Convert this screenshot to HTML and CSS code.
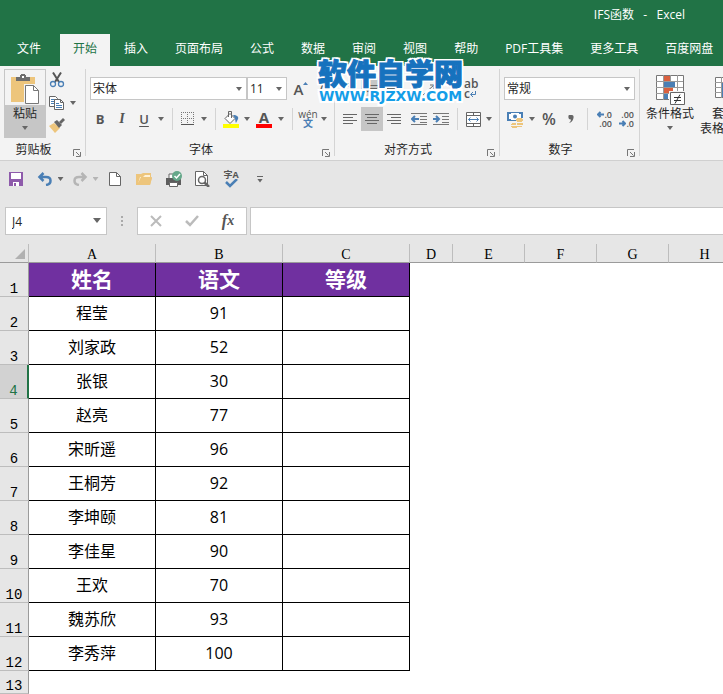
FILE: index.html
```
<!DOCTYPE html>
<html lang="zh-CN">
<head>
    <meta charset="UTF-8">
    <meta name="viewport" content="width=device-width, initial-scale=1.0">
    <title>IFS函数 - Excel</title>
    <link rel="stylesheet" href="styles.css">
</head>
<body>
    <header class="titlebar">IFS函数 &nbsp;&nbsp;-&nbsp;&nbsp; Excel</header>

    <nav class="tabs">
        <button class="tab tab-file">文件</button>
        <button class="tab active">开始</button>
        <button class="tab">插入</button>
        <button class="tab">页面布局</button>
        <button class="tab">公式</button>
        <button class="tab">数据</button>
        <button class="tab">审阅</button>
        <button class="tab">视图</button>
        <button class="tab">帮助</button>
        <button class="tab">PDF工具集</button>
        <button class="tab">更多工具</button>
        <button class="tab">百度网盘</button>
    </nav>

    <section class="ribbon">
        <!-- 剪贴板 -->
        <div class="group">
            <div class="group-body clipboard">
                <button class="paste">
                    <span class="paste-icon">
                        <svg width="30" height="32" viewBox="0 0 30 32">
                            <path d="M1 3h24v25H1z" fill="#edc57c"/>
                            <path d="M6 3h4V1h1V0h4v1h1v2h4v4H6z" fill="#6d6d6d"/>
                            <path d="M12 2h2v2h-2z" fill="#fff"/>
                            <path d="M14 10h16v20H14z" fill="#f3f3f3"/>
                            <path d="M15.500 11.500h8l5 5v13h-13z" fill="#fff" stroke="#777"/>
                            <path d="M23.500 11.500v5h5" fill="none" stroke="#777"/>
                        </svg>
                    </span>
                    <span class="paste-label">粘贴<i class="caret"></i></span>
                </button>
                <div class="clip-tools">
                    <button class="mini" aria-label="剪切">
                        <svg width="16" height="16" viewBox="0 0 16 16" fill="none">
                            <path d="M4 0.500L10 10M12 0.500L6 10" stroke="#555" stroke-width="2"/>
                            <circle cx="4" cy="12" r="2.500" stroke="#4a7fb5" stroke-width="1.300"/>
                            <circle cx="12" cy="12" r="2.500" stroke="#4a7fb5" stroke-width="1.300"/>
                        </svg>
                    </button>
                    <div class="mini-row">
                        <button class="mini" aria-label="复制">
                            <svg width="16" height="16" viewBox="0 0 16 16">
                                <path d="M0.500 1.500h6l2 2v8h-8z" fill="#fff" stroke="#666"/>
                                <path d="M2 4.500h4M2 6.500h3M2 8.500h3" stroke="#4a7fb5"/>
                                <path d="M5.500 4.500h6l3 3v7h-9z" fill="#fff" stroke="#666"/>
                                <path d="M11.500 4.500v3h3" fill="none" stroke="#666"/>
                                <path d="M7 8.500h3M7 10.500h6M7 12.500h6" stroke="#4a7fb5"/>
                            </svg>
                        </button>
                        <button class="drop" aria-label="复制选项"><i class="caret"></i></button>
                    </div>
                    <button class="mini" aria-label="格式刷">
                        <svg width="18" height="16" viewBox="0 0 18 16">
                            <path d="M0 8l5-3 6 5-5 5z" fill="#edc57c"/>
                            <path d="M5 4l3-2 5 5-3 3z" fill="#666"/>
                            <path d="M10 4l4-4 2 2-4 4z" fill="#666"/>
                        </svg>
                    </button>
                </div>
            </div>
            <div class="group-label">剪贴板<svg class="launcher" width="8" height="8" viewBox="0 0 8 8"><path d="M0.500 7V0.500H7M3 3l3.500 3.500M7.500 3v4.500H3" fill="none" stroke="#777"/></svg></div>
        </div>

        <!-- 字体 -->
        <div class="group">
            <div class="group-body font">
                <div class="row">
                    <span class="combo combo-font"><select aria-label="字体"><option>宋体</option></select></span>
                    <span class="combo combo-size"><select aria-label="字号"><option>11</option></select></span>
                    <button class="tool grow" aria-label="增大字号">A<svg width="5" height="3" viewBox="0 0 5 3"><path d="M0 3h5L2.500 0z" fill="#4a7fb5"/></svg></button>
                    <button class="tool shrink" aria-label="减小字号">A</button>
                </div>
                <div class="row">
                    <button class="tool bold">B</button>
                    <button class="tool italic">I</button>
                    <button class="tool underline">U</button>
                    <button class="drop" aria-label="下划线选项"><i class="caret"></i></button>
                    <span class="sep"></span>
                    <button class="tool narrow" aria-label="边框">
                        <svg width="14" height="14" viewBox="0 0 14 14"><path d="M0.500 0v13M6.500 0v13M12.500 0v13M0 0.500h13M0 6.500h13" stroke="#777" stroke-dasharray="1 1"/><path d="M0 12.500h13" stroke="#555"/></svg>
                    </button>
                    <button class="drop" aria-label="边框选项"><i class="caret"></i></button>
                    <span class="sep"></span>
                    <button class="tool narrow" aria-label="填充颜色">
                        <svg width="16" height="17" viewBox="0 0 16 17">
                            <path d="M2 7.500l5-5 5 5-5 5z" fill="#fff" stroke="#666"/>
                            <path d="M5.500 6V0.500h3V7" fill="none" stroke="#666"/>
                            <path d="M10 4c4 0 6 2 5 4l-2 4c-1-2 0-4-3-8z" fill="#4a7fb5"/>
                            <path d="M0 13h16v4H0z" fill="#ff0"/>
                        </svg>
                    </button>
                    <button class="drop" aria-label="填充选项"><i class="caret"></i></button>
                    <button class="tool font-color" aria-label="字体颜色"><span>A</span></button>
                    <button class="drop" aria-label="字体颜色选项"><i class="caret"></i></button>
                    <span class="sep"></span>
                    <button class="tool narrow pinyin"><span>wén</span><b>文</b></button>
                    <button class="drop" aria-label="拼音选项"><i class="caret"></i></button>
                </div>
            </div>
            <div class="group-label">字体<svg class="launcher" width="8" height="8" viewBox="0 0 8 8"><path d="M0.500 7V0.500H7M3 3l3.500 3.500M7.500 3v4.500H3" fill="none" stroke="#777"/></svg></div>
        </div>

        <!-- 对齐方式 -->
        <div class="group">
            <div class="group-body align">
                <div class="row">
                    <button class="tool" aria-label="顶端对齐"><svg width="14" height="14" viewBox="0 0 14 14"><path d="M0 1.500h14M2 4.500h10M0 7.500h14" stroke="#666"/></svg></button>
                    <button class="tool pressed" aria-label="垂直居中"><svg width="14" height="14" viewBox="0 0 14 14"><path d="M0 3.500h14M2 6.500h10M0 9.500h14" stroke="#666"/></svg></button>
                    <button class="tool" aria-label="底端对齐"><svg width="14" height="14" viewBox="0 0 14 14"><path d="M0 6.500h14M2 9.500h10M0 12.500h14" stroke="#666"/></svg></button>
                    <button class="tool orient" aria-label="方向"><svg width="16" height="14" viewBox="0 0 16 14"><path d="M3 13L14 3M10 3h4v4" fill="none" stroke="#666"/></svg></button>
                    <button class="tool wrap-text" aria-label="自动换行"><span>ab</span><span>c<svg width="6" height="6" viewBox="0 0 6 6"><path d="M5.500 0v3.500H1M3 1L0.500 3.500 3 6" fill="none" stroke="#4a7fb5"/></svg></span></button>
                </div>
                <div class="row">
                    <button class="tool" aria-label="左对齐"><svg width="14" height="12" viewBox="0 0 14 12"><path d="M0 1.500h14M0 4.500h10M0 7.500h14M0 10.500h10" stroke="#666"/></svg></button>
                    <button class="tool pressed" aria-label="居中"><svg width="14" height="12" viewBox="0 0 14 12"><path d="M0 1.500h14M2 4.500h10M0 7.500h14M2 10.500h10" stroke="#666"/></svg></button>
                    <button class="tool" aria-label="右对齐"><svg width="14" height="12" viewBox="0 0 14 12"><path d="M0 1.500h14M4 4.500h10M0 7.500h14M4 10.500h10" stroke="#666"/></svg></button>
                    <button class="tool indent" aria-label="减少缩进"><svg width="16" height="14" viewBox="0 0 16 14"><path d="M0 1.500h16M9 4.500h7M9 7.500h7M9 10.500h7M0 12.500h16" stroke="#777"/><path d="M8 7H1M4 4L1 7l3 3" fill="none" stroke="#4a7fb5" stroke-width="2"/></svg></button>
                    <button class="tool" aria-label="增加缩进"><svg width="16" height="14" viewBox="0 0 16 14"><path d="M0 1.500h16M9 4.500h7M9 7.500h7M9 10.500h7M0 12.500h16" stroke="#777"/><path d="M0 7h6M3 4l3 3-3 3" fill="none" stroke="#4a7fb5" stroke-width="2"/></svg></button>
                    <span class="sep"></span>
                    <button class="tool narrow" aria-label="合并后居中"><svg width="15" height="15" viewBox="0 0 15 15"><path d="M0.500 0.500h14v14H0.500zM0.500 3.500h14M0.500 11.500h14M7.500 0.500v3M7.500 11.500v3" fill="#fff" stroke="#666"/><path d="M2.500 7.500h10M4.500 5.500l-2 2 2 2M10.500 5.500l2 2-2 2" fill="none" stroke="#4a7fb5"/></svg></button>
                    <button class="drop" aria-label="合并选项"><i class="caret"></i></button>
                </div>
            </div>
            <div class="group-label">对齐方式<svg class="launcher" width="8" height="8" viewBox="0 0 8 8"><path d="M0.500 7V0.500H7M3 3l3.500 3.500M7.500 3v4.500H3" fill="none" stroke="#777"/></svg></div>
        </div>

        <!-- 数字 -->
        <div class="group">
            <div class="group-body number">
                <div class="row">
                    <span class="combo combo-number"><select aria-label="数字格式"><option>常规</option></select></span>
                </div>
                <div class="row">
                    <button class="tool" aria-label="会计数字格式">
                        <svg width="17" height="17" viewBox="0 0 17 17">
                            <path d="M0 1h16v9H0z" fill="#4a7fb5"/><path d="M2 3h2V2h8v1h2v5h-2v1H4V8H2z" fill="#fff"/><circle cx="8" cy="5.500" r="2" fill="#4a7fb5"/>
                            <path d="M9 7h7v10H9zM4 12h6v5H4z" fill="#f3f3f3"/>
                            <path d="M10 7h5v1h1v2h-1v1H10v-1H9V8h1zM10 12h6v2h-6zM10 15h5v1h-5zM5 12h4v2H4v-1h1zM4 15h6v2H5v-1H4z" fill="#edc57c"/>
                        </svg>
                    </button>
                    <button class="drop" aria-label="会计格式选项"><i class="caret"></i></button>
                    <button class="tool percent">%</button>
                    <button class="tool" aria-label="千位分隔样式"><svg width="6" height="8" viewBox="0 0 6 8"><path d="M1 0h3c1 0 2 1 1.500 3C5 6 3 7.500 1 8c1-1 2-2 2-3.500C0 5 0 0.500 1 0z" fill="#666"/></svg></button>
                    <span class="sep"></span>
                    <button class="tool narrow decimal"><span><svg width="7" height="7" viewBox="0 0 7 7"><path d="M7 3.500H1M3.500 1L1 3.500 3.500 6" fill="none" stroke="#4a7fb5" stroke-width="2"/></svg>.0</span><span>.00</span></button>
                    <button class="tool decimal"><span>.00</span><span><svg width="7" height="7" viewBox="0 0 7 7"><path d="M0 3.500h6M3.500 1L6 3.500 3.500 6" fill="none" stroke="#4a7fb5" stroke-width="2"/></svg>.0</span></button>
                </div>
            </div>
            <div class="group-label">数字<svg class="launcher" width="8" height="8" viewBox="0 0 8 8"><path d="M0.500 7V0.500H7M3 3l3.500 3.500M7.500 3v4.500H3" fill="none" stroke="#777"/></svg></div>
        </div>

        <!-- 样式 -->
        <div class="group styles">
            <button class="big">
                <svg width="32" height="32" viewBox="0 0 32 32">
                    <path d="M2.500 1.500h27v24h-27z" fill="#fff" stroke="#777"/>
                    <path d="M9.500 1v25M16.500 1v25M23.500 1v25M2 7.500h27M2 13.500h27M2 19.500h27" stroke="#999"/>
                    <path d="M10 2h6v5h-6zM10 14h9v5h-9z" fill="#d9603f"/>
                    <path d="M10 8h11v5H10zM10 20h4v5h-4z" fill="#4a7fb5"/>
                    <path d="M15 17h17v15H15z" fill="#f3f3f3"/>
                    <path d="M16.500 18.500h14v12h-14z" fill="#fff" stroke="#666"/>
                    <path d="M20 23.500h7M20 26.500h7M26 20.500l-5 9" stroke="#333"/>
                </svg>
                <span>条件格式</span>
                <i class="caret"></i>
            </button>
            <button class="big big-table">
                <svg width="32" height="32" viewBox="0 0 32 32">
                    <path d="M7.500 3.500h24v20h-24z" fill="#fff" stroke="#777"/>
                    <path d="M13.500 3v21M19.500 3v21M25.500 3v21M7 8.500h24M7 13.500h24M7 18.500h24" stroke="#999"/>
                    <path d="M14 9h17v14H14z" fill="#4a7fb5"/>
                </svg>
                <span>套用</span>
                <span>表格格式</span>
            </button>
        </div>
    </section>

    <!-- 快速访问工具栏 -->
    <div class="quickbar">
        <button class="quick" aria-label="保存"><svg width="14" height="14" viewBox="0 0 14 14"><path d="M0 0h14v14H0z" fill="#8e5bab"/><path d="M2 1h10v6H2zM4 10h6v4H4z" fill="#fff"/><path d="M5 11h2v3H5z" fill="#8e5bab"/></svg></button>
        <button class="quick quick-split" aria-label="撤消"><svg width="16" height="14" viewBox="0 0 16 14"><path d="M2 5h7c6 0 6 7 0 8M6.500 1l-4 4 4 4" fill="none" stroke="#4a7fb5" stroke-width="2.500"/></svg><i class="caret"></i></button>
        <button class="quick quick-split disabled" aria-label="恢复"><svg width="16" height="14" viewBox="0 0 16 14"><path d="M14 5H7c-6 0-6 7 0 8M9.500 1l4 4-4 4" fill="none" stroke="#b5b5b5" stroke-width="2.500"/></svg><i class="caret"></i></button>
        <button class="quick" aria-label="新建"><svg width="12" height="14" viewBox="0 0 12 14"><path d="M0.500 0.500h7l4 4v9h-11z" fill="#fff" stroke="#666"/><path d="M7.500 0.500v4h4" fill="none" stroke="#666"/></svg></button>
        <button class="quick" aria-label="打开"><svg width="17" height="14" viewBox="0 0 17 14"><path d="M0 12V2h5l2-1h8v4h1l-2 8H0z" fill="#edc57c"/><path d="M2 12L5 5h9V3H9L7 5H4z" fill="#fff1d6"/><path d="M1 13l4-7h11l-2 7z" fill="#edc57c"/></svg></button>
        <button class="quick" aria-label="快速打印"><svg width="17" height="17" viewBox="0 0 17 17"><path d="M4 3h8v5H4z" fill="#fff" stroke="#666"/><path d="M1 7h15v7H1z" fill="#5d5d5d"/><path d="M4.500 11.500h8v4h-8z" fill="#fff" stroke="#666"/><circle cx="12" cy="5" r="5" fill="#65a88a"/><path d="M9.500 5l2 2 3.500-4" fill="none" stroke="#fff" stroke-width="1.500"/></svg></button>
        <button class="quick" aria-label="打印预览"><svg width="15" height="16" viewBox="0 0 15 16"><path d="M0.500 0.500h8l4 4v10h-12z" fill="#fff" stroke="#666"/><path d="M8.500 0.500v4h4" fill="none" stroke="#666"/><circle cx="7" cy="9" r="3.500" fill="#fff" stroke="#666" stroke-width="1.500"/><path d="M9.500 11.500L14 16" stroke="#666" stroke-width="2.500"/></svg></button>
        <button class="quick spell" aria-label="拼写检查"><span>字A</span><svg width="14" height="9" viewBox="0 0 14 9"><path d="M2 3l4 4 7-7" fill="none" stroke="#4a7fb5" stroke-width="2.500"/></svg></button>
        <button class="quick customize" aria-label="自定义"><i class="caret"></i></button>
    </div>

    <!-- 编辑栏 -->
    <div class="formula-bar">
        <span class="name-box"><input type="text" value="J4" aria-label="名称框"></span>
        <span class="grip"><i></i><i></i><i></i></span>
        <div class="fx-tools">
            <button aria-label="取消"><svg width="12" height="12" viewBox="0 0 12 12"><path d="M1 1l10 10M11 1L1 11" stroke="#bbb" stroke-width="2"/></svg></button>
            <button aria-label="输入"><svg width="14" height="12" viewBox="0 0 14 12"><path d="M1 6l4 4 8-9" fill="none" stroke="#bbb" stroke-width="2.500"/></svg></button>
            <button class="fx">f<small>x</small></button>
        </div>
        <input class="formula" type="text" aria-label="编辑栏">
    </div>

    <main class="sheet">
        <table>
            <colgroup>
                <col class="col-head"><col class="col-data"><col class="col-data"><col class="col-data">
                <col class="col-d"><col class="col-rest"><col class="col-rest"><col class="col-rest"><col class="col-rest">
            </colgroup>
            <thead>
                <tr>
                    <th class="corner"><svg width="10" height="10" viewBox="0 0 10 10"><path d="M10 0v10H0z" fill="#b1b1b1"/></svg></th>
                    <th>A</th><th>B</th><th>C</th><th>D</th><th>E</th><th>F</th><th>G</th><th>H</th>
                </tr>
            </thead>
            <tbody>
                <tr class="title-row"><th>1</th><td>姓名</td><td>语文</td><td>等级</td></tr>
                <tr><th>2</th><td>程莹</td><td>91</td><td></td></tr>
                <tr><th>3</th><td>刘家政</td><td>52</td><td></td></tr>
                <tr class="current"><th>4</th><td>张银</td><td>30</td><td></td></tr>
                <tr><th>5</th><td>赵亮</td><td>77</td><td></td></tr>
                <tr><th>6</th><td>宋昕遥</td><td>96</td><td></td></tr>
                <tr><th>7</th><td>王桐芳</td><td>92</td><td></td></tr>
                <tr><th>8</th><td>李坤颐</td><td>81</td><td></td></tr>
                <tr><th>9</th><td>李佳星</td><td>90</td><td></td></tr>
                <tr><th>10</th><td>王欢</td><td>70</td><td></td></tr>
                <tr><th>11</th><td>魏苏欣</td><td>93</td><td></td></tr>
                <tr><th>12</th><td>李秀萍</td><td>100</td><td></td></tr>
                <tr class="short"><th>13</th></tr>
            </tbody>
        </table>
    </main>

    <div class="watermark">
        <div class="wm-name">软件自学网</div>
        <div class="wm-url">WWW.RJZXW.COM</div>
    </div>
</body>
</html>
```
FILE: styles.css
```
* {
    box-sizing: border-box;
}
body {
    margin: 0;
    min-height: 100vh;
    display: flex;
    flex-direction: column;
    position: relative;
    overflow: hidden;
    background: #fff;
    color: #262626;
    font: 12px/16px "Open Sans", "Noto Sans CJK SC", sans-serif;
}
button, input, select {
    font: inherit;
    color: inherit;
    margin: 0;
    padding: 0;
    border: 0;
    border-radius: 0;
    background: none;
}
svg {
    display: block;
    flex: none;
}

/* 标题和选项卡 */
.titlebar {
    height: 34px;
    padding: 7px 38px 0 0;
    background: #217346;
    color: #fff;
    text-align: right;
}
.tabs {
    display: flex;
    gap: 1px;
    height: 32px;
    background: #217346;
}
.tab {
    flex: none;
    padding: 0 13px 2px;
    color: #fff;
    white-space: nowrap;
}
.tab-file {
    padding: 0 18px 2px 17px;
}
.tab.active {
    background: #f3f3f3;
    color: #217346;
}

/* 功能区 */
.ribbon {
    display: flex;
    padding: 3px 0 4px;
    background: #f3f3f3;
    border-bottom: 1px solid #d0d0d0;
}
.group {
    flex: none;
    border-right: 1px solid #d4d4d4;
}
.group-body {
    height: 70px;
    padding: 8px 4px 0;
    display: flex;
    flex-direction: column;
    gap: 6px;
}
.group-label {
    position: relative;
    height: 17px;
    padding: 3px 18px 0 0;
    line-height: 16px;
    text-align: center;
}
.launcher {
    position: absolute;
    right: 4px;
    bottom: -1px;
}
.row {
    display: flex;
    height: 24px;
}
.caret {
    display: block;
    flex: none;
    width: 6px;
    height: 4px;
    background: #666;
    clip-path: polygon(0 0, 100% 0, 50% 100%);
}
.tool {
    width: 22px;
    height: 24px;
    display: flex;
    align-items: center;
    justify-content: center;
    color: #555;
}
.tool.narrow {
    width: 20px;
}
.tool.pressed {
    background: #c6c6c6;
}
.tool:hover, .quick:hover {
    background: #d5d5d5;
}
.drop {
    width: 12px;
    display: flex;
    align-items: center;
    justify-content: center;
}
.sep {
    width: 1px;
    height: 22px;
    margin: 1px 5px;
    background: #d4d4d4;
}

.clipboard {
    flex-direction: row;
    gap: 3px;
    padding: 0 6px 0 4px;
}
.paste {
    width: 42px;
    height: 69px;
    border: 1px solid #c6c6c6;
}
.paste-icon {
    display: flex;
    justify-content: center;
    height: 35px;
    padding-top: 4px;
    background: #f3f3f3;
}
.paste-label {
    display: flex;
    flex-direction: column;
    align-items: center;
    gap: 4px;
    height: 32px;
    padding-top: 1px;
    background: #c6c6c6;
}
.clip-tools {
    display: flex;
    flex-direction: column;
    gap: 7px;
    padding-top: 3px;
}
.mini {
    width: 18px;
    height: 16px;
}
.mini-row {
    display: flex;
}

.combo {
    position: relative;
    height: 23px;
    border: 1px solid #c6c6c6;
    background: #fff;
}
.combo::after, .name-box::after {
    content: "";
    position: absolute;
    right: 4px;
    top: 9px;
    width: 6px;
    height: 4px;
    background: #666;
    clip-path: polygon(0 0, 100% 0, 50% 100%);
    pointer-events: none;
}
.combo select {
    appearance: none;
    width: 100%;
    height: 21px;
    padding-left: 2px;
    outline: none;
}
.font {
    padding: 8px 0 0 3px;
}
.combo-font {
    width: 157px;
    margin-left: 1px;
}
.combo-size {
    width: 40px;
}
.combo-number {
    width: 131px;
}
.grow {
    margin-left: 3px;
    font-size: 15px;
    font-weight: 600;
}
.grow svg {
    align-self: flex-start;
    margin-top: 5px;
}
.shrink {
    font-weight: 600;
}
.bold {
    font-size: 13px;
    font-weight: 700;
}
.italic {
    font-family: "Liberation Serif", serif;
    font-size: 14px;
    font-style: italic;
    font-weight: 700;
}
.underline {
    font-size: 13px;
    font-weight: 600;
    text-decoration: underline;
    text-underline-offset: 2px;
}
.font-color span {
    width: 16px;
    height: 17px;
    border-bottom: 4px solid #f00;
    font-size: 15px;
    font-weight: 700;
    line-height: 13px;
}
.pinyin {
    flex-direction: column;
    font-size: 10px;
    line-height: 9px;
}
.pinyin b {
    color: #4a7fb5;
    font-weight: 700;
}
.indent {
    margin-left: 3px;
}
.orient {
    margin-left: 12px;
}
.wrap-text {
    margin-left: 20px;
    flex-direction: column;
    align-items: flex-start;
    padding-left: 5px;
    line-height: 10px;
    font-weight: 600;
}
.wrap-text span, .decimal span {
    display: flex;
    align-items: center;
}
.percent {
    font-size: 16px;
    font-weight: 600;
}
.decimal {
    flex-direction: column;
    align-items: flex-end;
    padding-right: 1px;
    font-size: 9px;
    line-height: 9px;
    font-weight: 600;
}
.styles {
    display: flex;
    flex: 1 0 0;
    min-width: 0;
    overflow: hidden;
    border: 0;
}
.big {
    flex: none;
    width: 60px;
    padding-top: 5px;
    display: flex;
    flex-direction: column;
    align-items: center;
    line-height: 15px;
}
.big-table {
    width: 48px;
}
.big span + .caret {
    margin-top: 5px;
}

/* 快速访问工具栏 */
.quickbar {
    display: flex;
    gap: 1px;
    height: 46px;
    padding: 4px 2px 14px;
    background: #e6e6e6;
}
.quick {
    flex: none;
    width: 28px;
    display: flex;
    align-items: center;
    justify-content: center;
}
.quick-split {
    width: 34px;
    gap: 5px;
    padding-left: 4px;
}
.disabled .caret {
    background: #b5b5b5;
}
.spell {
    flex-direction: column;
    font-size: 9px;
    line-height: 9px;
    font-weight: 700;
    color: #555;
}
.customize::before {
    content: "";
    width: 6px;
    height: 1px;
    background: #666;
}
.customize {
    flex-direction: column;
    gap: 2px;
}

/* 编辑栏 */
.formula-bar {
    display: flex;
    padding: 0 0 9px 5px;
    background: #e6e6e6;
}
.name-box, .fx-tools, .formula {
    height: 28px;
    border: 1px solid #c6c6c6;
    background: #fff;
}
.name-box {
    position: relative;
    width: 102px;
}
.name-box::after {
    right: 5px;
    top: 10px;
    width: 8px;
    height: 5px;
}
.name-box input {
    width: 80px;
    height: 26px;
    padding-left: 6px;
}
.grip {
    width: 30px;
    display: flex;
    flex-direction: column;
    align-items: center;
    justify-content: center;
    gap: 2px;
}
.grip i {
    width: 2px;
    height: 2px;
    background: #aaa;
}
.fx-tools {
    display: flex;
    width: 110px;
}
.fx-tools button {
    flex: 1;
    display: flex;
    align-items: center;
    justify-content: center;
}
.fx-tools .fx {
    font: italic 700 16px/20px "Liberation Serif", serif;
    color: #555;
}
.fx small {
    font-size: 14px;
}
.formula {
    flex: 1;
    min-width: 0;
    margin-left: 3px;
    padding: 0 6px;
    border-right: 0;
}

/* 工作表 */
.sheet {
    flex: 1;
    overflow: hidden;
}
table {
    width: 741px;
    table-layout: fixed;
    border-collapse: separate;
    border-spacing: 0;
}
.col-head {
    width: 29px;
}
.col-data {
    width: 127px;
}
.col-d {
    width: 43px;
}
.col-rest {
    width: 72px;
}
th, td {
    padding: 0;
    text-align: center;
}
th {
    background: #e6e6e6;
    font-weight: 400;
    color: #000;
}
thead th {
    height: 19px;
    border-right: 1px solid #bdbdbd;
    border-bottom: 1px solid #9b9b9b;
    font: 14px/14px "Liberation Serif", serif;
    vertical-align: bottom;
}
.corner svg {
    margin: 0 0 3px 15px;
}
tbody th {
    height: 34px;
    border-right: 1px solid #9b9b9b;
    border-bottom: 1px solid #bdbdbd;
    font: 14px/13px "Liberation Mono", monospace;
    vertical-align: bottom;
}
tbody td {
    padding-bottom: 2px;
    border-right: 1px solid #000;
    border-bottom: 1px solid #000;
    color: #000;
    font-size: 16px;
    line-height: 20px;
}
.title-row td {
    background: #7030a0;
    color: #fff;
    font-size: 21px;
    font-weight: 700;
}
.current th {
    background: #d2d2d2;
    border-right: 2px solid #217346;
    color: #217346;
}
.short th {
    height: 23px;
}

/* 水印 */
.watermark {
    position: absolute;
    left: 318px;
    top: 58px;
    color: #1672be;
    text-align: center;
    text-shadow: -2px 0 #fff, 2px 0 #fff, 0 -2px #fff, 0 2px #fff, -2px -2px #fff, 2px -2px #fff, -2px 2px #fff, 2px 2px #fff;
    pointer-events: none;
}
.wm-name {
    font-size: 29px;
    line-height: 32px;
    font-weight: 900;
    -webkit-text-stroke: 1px #1672be;
}
.wm-url {
    color: #149ee8;
    font: 700 14px/12px "DejaVu Sans", sans-serif;
}
```
